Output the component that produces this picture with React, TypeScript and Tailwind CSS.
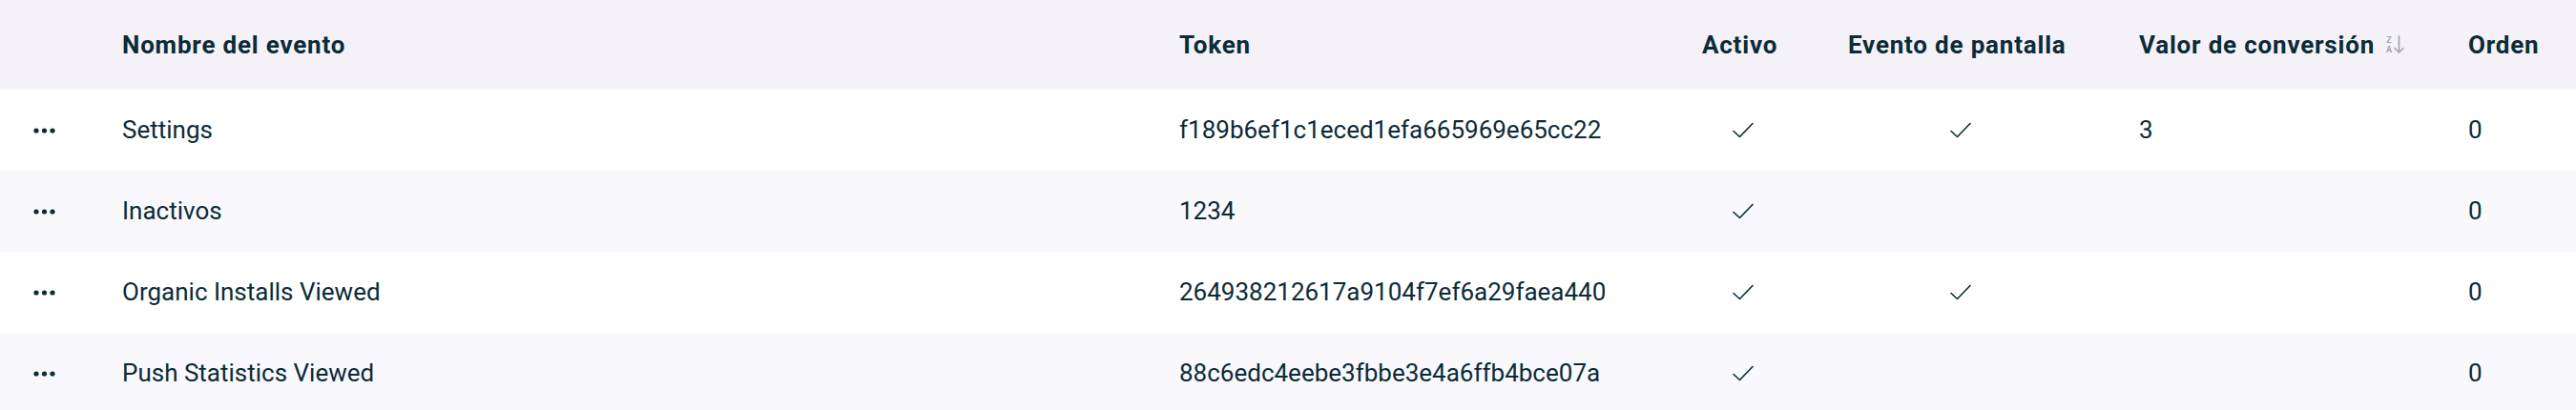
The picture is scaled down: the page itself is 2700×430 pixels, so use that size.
import React from "react";

type Row = {
  name: string;
  token: string;
  active: boolean;
  screen: boolean;
  value: string;
  order: string;
};

const rows: Row[] = [
  { name: "Settings", token: "f189b6ef1c1eced1efa665969e65cc22", active: true, screen: true, value: "3", order: "0" },
  { name: "Inactivos", token: "1234", active: true, screen: false, value: "", order: "0" },
  { name: "Organic Installs Viewed", token: "264938212617a9104f7ef6a29faea440", active: true, screen: true, value: "", order: "0" },
  { name: "Push Statistics Viewed", token: "88c6edc4eebe3fbbe3e4a6ffb4bce07a", active: true, screen: false, value: "", order: "0" },
];

function Dots() {
  return (
    <svg width="23" height="6" viewBox="0 0 23 6" className="text-[#0c2b36]">
      <circle cx="3" cy="3" r="2.6" fill="currentColor" />
      <circle cx="11.5" cy="3" r="2.6" fill="currentColor" />
      <circle cx="20" cy="3" r="2.6" fill="currentColor" />
    </svg>
  );
}

function Check() {
  return (
    <svg width="22" height="17" viewBox="0 0 22 17" fill="none" className="text-[#0c2b36]">
      <path d="M1 9.5 L7.5 15.5 L21 1.5" stroke="currentColor" strokeWidth="1.6" strokeLinecap="round" strokeLinejoin="round" />
    </svg>
  );
}

function SortIcon() {
  return (
    <span className="inline-flex items-center gap-[2px] tracking-normal text-[#a3a3ad]">
      <span className="flex flex-col items-center text-[9px] font-bold leading-[10px]">
        <span>Z</span>
        <span>A</span>
      </span>
      <svg width="11" height="20" viewBox="0 0 11 20" fill="none">
        <path d="M5.5 1 V18 M1 13.5 L5.5 18 L10 13.5" stroke="currentColor" strokeWidth="1.6" strokeLinecap="round" strokeLinejoin="round" />
      </svg>
    </span>
  );
}

export default function App() {
  return (
    <div className="w-[2700px] h-[430px] overflow-hidden bg-white font-['Roboto',sans-serif] text-[26px] text-[#0c2b36]">
      <table className="w-full table-fixed border-collapse">
        <colgroup>
          <col className="w-[128px]" />
          <col className="w-[1108px]" />
          <col className="w-[548px]" />
          <col className="w-[153px]" />
          <col className="w-[305px]" />
          <col className="w-[345px]" />
          <col />
        </colgroup>
        <thead>
          <tr className="h-[94px] bg-[#f4f2f8] text-left font-bold tracking-[0.8px]">
            <th />
            <th>Nombre del evento</th>
            <th>Token</th>
            <th>Activo</th>
            <th>Evento de pantalla</th>
            <th>
              <span className="inline-flex items-center gap-[12px]">
                Valor de conversión
                <SortIcon />
              </span>
            </th>
            <th>Orden</th>
          </tr>
        </thead>
        <tbody>
          {rows.map((r, i) => (
            <tr key={r.name} className={i % 2 === 0 ? "h-[85px] bg-white" : "h-[85px] bg-[#f9f8fd]"}>
              <td className="pl-[35px]">
                <div className="flex items-center">
                  <Dots />
                </div>
              </td>
              <td>{r.name}</td>
              <td>{r.token}</td>
              <td>
                <div className="flex w-[86px] justify-center">{r.active && <Check />}</div>
              </td>
              <td>
                <div className="flex w-[236px] justify-center">{r.screen && <Check />}</div>
              </td>
              <td>{r.value}</td>
              <td>{r.order}</td>
            </tr>
          ))}
        </tbody>
      </table>
    </div>
  );
}
